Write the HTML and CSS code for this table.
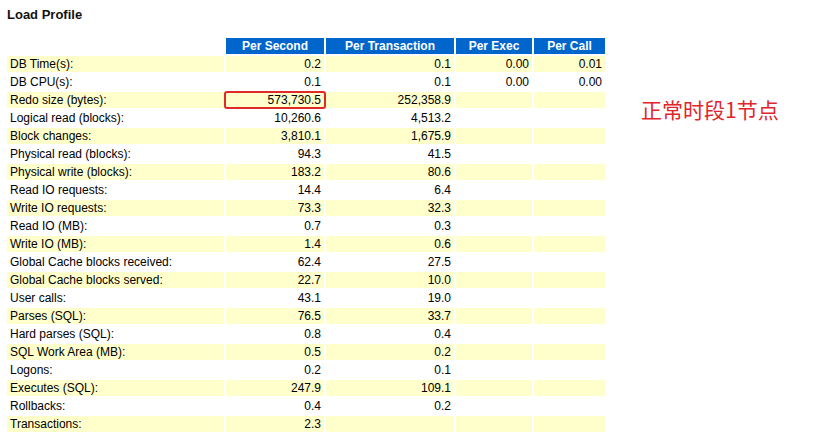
FILE: index.html
```html
<!DOCTYPE html>
<html>
<head>
<meta charset="utf-8">
<link rel="stylesheet" href="styles.css">
</head>
<body>
<div class="page">
  <h3 class="title">Load Profile</h3>
  <div class="content">
    <table class="awr">
      <colgroup>
        <col class="c-label"><col class="c-ps"><col class="c-pt"><col class="c-pe"><col class="c-pc">
      </colgroup>
      <thead>
        <tr><th class="blank"></th><th>Per Second</th><th>Per Transaction</th><th>Per Exec</th><th>Per Call</th></tr>
      </thead>
      <tbody>
        <tr class="y"><td>DB Time(s):</td><td>0.2</td><td>0.1</td><td>0.00</td><td>0.01</td></tr>
        <tr><td>DB CPU(s):</td><td>0.1</td><td>0.1</td><td>0.00</td><td>0.00</td></tr>
        <tr class="y"><td>Redo size (bytes):</td><td class="mark">573,730.5</td><td>252,358.9</td><td></td><td></td></tr>
        <tr><td>Logical read (blocks):</td><td>10,260.6</td><td>4,513.2</td><td></td><td></td></tr>
        <tr class="y"><td>Block changes:</td><td>3,810.1</td><td>1,675.9</td><td></td><td></td></tr>
        <tr><td>Physical read (blocks):</td><td>94.3</td><td>41.5</td><td></td><td></td></tr>
        <tr class="y"><td>Physical write (blocks):</td><td>183.2</td><td>80.6</td><td></td><td></td></tr>
        <tr><td>Read IO requests:</td><td>14.4</td><td>6.4</td><td></td><td></td></tr>
        <tr class="y"><td>Write IO requests:</td><td>73.3</td><td>32.3</td><td></td><td></td></tr>
        <tr><td>Read IO (MB):</td><td>0.7</td><td>0.3</td><td></td><td></td></tr>
        <tr class="y"><td>Write IO (MB):</td><td>1.4</td><td>0.6</td><td></td><td></td></tr>
        <tr><td>Global Cache blocks received:</td><td>62.4</td><td>27.5</td><td></td><td></td></tr>
        <tr class="y"><td>Global Cache blocks served:</td><td>22.7</td><td>10.0</td><td></td><td></td></tr>
        <tr><td>User calls:</td><td>43.1</td><td>19.0</td><td></td><td></td></tr>
        <tr class="y"><td>Parses (SQL):</td><td>76.5</td><td>33.7</td><td></td><td></td></tr>
        <tr><td>Hard parses (SQL):</td><td>0.8</td><td>0.4</td><td></td><td></td></tr>
        <tr class="y"><td>SQL Work Area (MB):</td><td>0.5</td><td>0.2</td><td></td><td></td></tr>
        <tr><td>Logons:</td><td>0.2</td><td>0.1</td><td></td><td></td></tr>
        <tr class="y"><td>Executes (SQL):</td><td>247.9</td><td>109.1</td><td></td><td></td></tr>
        <tr><td>Rollbacks:</td><td>0.4</td><td>0.2</td><td></td><td></td></tr>
        <tr class="y"><td>Transactions:</td><td>2.3</td><td></td><td></td><td></td></tr>
      </tbody>
    </table>
    <div class="note">正常时段1节点</div>
  </div>
</div>
</body>
</html>
```
FILE: styles.css
```css
html, body {
  margin: 0;
  padding: 0;
  background: #ffffff;
}
.page {
  padding: 7px 0 0 5px;
  font-family: "Liberation Sans", Arial, sans-serif;
  color: #000000;
}
.title {
  margin: 0;
  font-size: 13px;
  line-height: 16px;
  font-weight: bold;
  color: #111111;
  padding-left: 2px;
}
.content {
  display: flex;
  align-items: flex-start;
  margin-top: 13px;
}
.awr {
  border-collapse: separate;
  border-spacing: 2px;
  table-layout: fixed;
  width: 602px;
  font-size: 12px;
}
.c-label { width: 217px; }
.c-ps { width: 98px; }
.c-pt { width: 128px; }
.c-pe { width: 76px; }
.c-pc { width: 71px; }
.awr th {
  background: #0066cc;
  color: #ffffff;
  font-weight: bold;
  font-size: 12px;
  height: 16px;
  line-height: 16px;
  padding: 0 2px;
  text-align: center;
  white-space: nowrap;
}
.awr th.blank {
  background: transparent;
}
.awr td {
  height: 16px;
  line-height: 16px;
  padding: 0 3px 0 3px;
  text-align: right;
  white-space: nowrap;
  background: #ffffff;
}
.awr td:first-child {
  text-align: left;
}
.awr tr.y td {
  background: #ffffcc;
}
.awr td.mark {
  position: relative;
}
.awr td.mark::after {
  content: "";
  position: absolute;
  top: -1px;
  bottom: -1px;
  left: -2px;
  right: -2px;
  border: 2px solid #e02a2a;
  border-radius: 3px;
}
.note {
  margin-left: 34px;
  margin-top: 61px;
  font-family: "Noto Sans CJK SC", sans-serif;
  font-size: 21px;
  line-height: 25px;
  color: #e0262b;
  white-space: nowrap;
}
```
